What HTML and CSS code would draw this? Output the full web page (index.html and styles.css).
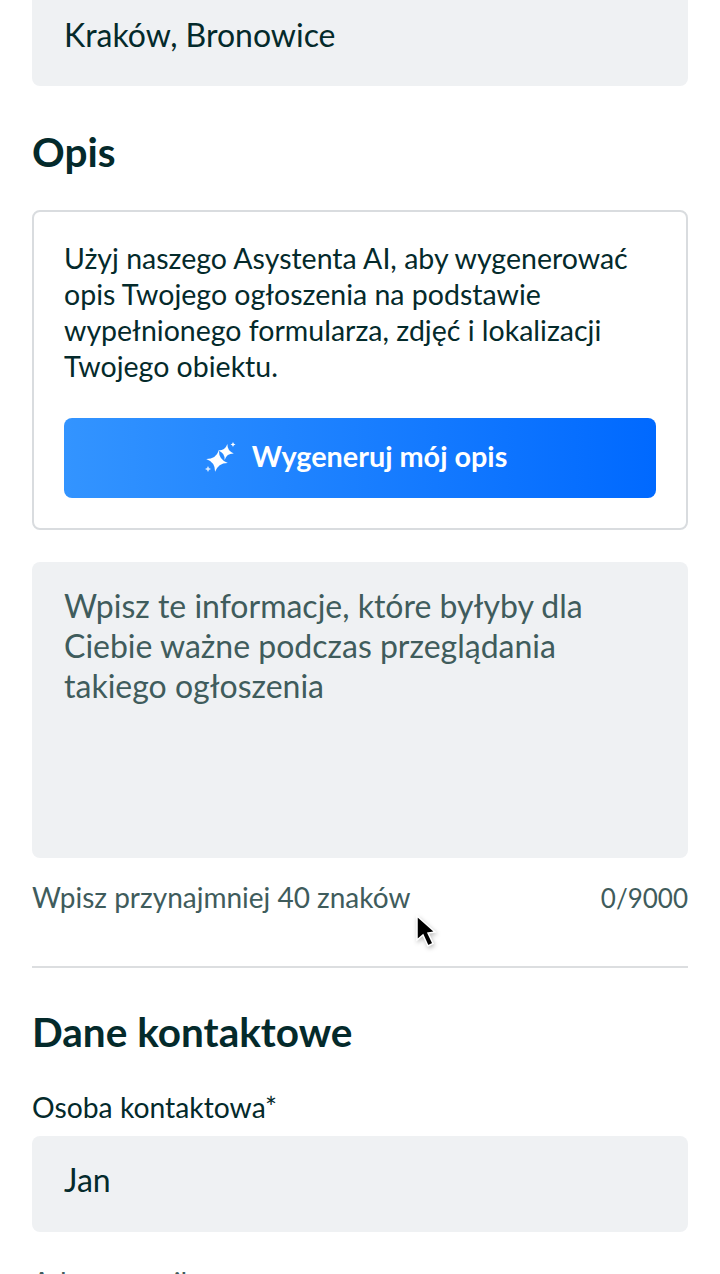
FILE: index.html
```html
<!DOCTYPE html>
<html lang="pl">

<head>
    <meta charset="UTF-8">
    <meta name="viewport" content="width=device-width, initial-scale=1.0">
    <title>Opis</title>
    <link rel="stylesheet" href="styles.css">
</head>

<body>
    <div class="container">
        <div class="field top-field">Kraków, Bronowice</div>

        <h2 class="title">Opis</h2>

        <div class="ai-box">
            <p>Użyj naszego Asystenta AI, aby wygenerować<br>opis Twojego ogłoszenia na podstawie<br>wypełnionego formularza, zdjęć i lokalizacji<br>Twojego obiektu.</p>
            <div class="ai-button">
                <svg width="32" height="32" viewBox="0 0 32 32" fill="#fff">
                    <path d="M12 8 Q13.500 17.500 23 19 Q13.500 20.500 12 30 Q10.500 20.500 1 19 Q10.500 17.500 12 8 Z" transform="rotate(10 12 19)" />
                    <path d="M21 2 Q22 9 29 10 Q22 11 21 18 Q20 11 13 10 Q20 9 21 2 Z" transform="rotate(10 21 10)" />
                    <path d="M28 0 Q28.400 2.100 30.500 2.500 Q28.400 2.900 28 5 Q27.600 2.900 25.500 2.500 Q27.600 2.100 28 0 Z" />
                    <path d="M3 24 Q3.500 26.500 6 27 Q3.500 27.500 3 30 Q2.500 27.500 0 27 Q2.500 26.500 3 24 Z" opacity="0.8" />
                </svg>
                <span class="ai-label">Wygeneruj mój opis</span>
            </div>
        </div>

        <div class="textarea">Wpisz te informacje, które byłyby dla<br>Ciebie ważne podczas przeglądania<br>takiego ogłoszenia</div>
        <div class="hint">
            <span>Wpisz przynajmniej 40 znaków</span>
            <span class="counter">0/9000</span>
        </div>

        <hr class="line">

        <h2 class="title contact-title">Dane kontaktowe</h2>

        <div class="label">Osoba kontaktowa*</div>
        <div class="field">Jan</div>
        <div class="label next-label">Adres e-mail</div>
    </div>

    <svg class="cursor" width="24" height="36" viewBox="0 0 24 36">
        <path d="M2 1 L2 25 L8 20 L13 31 L18 28.500 L13 18 L20 17 Z" fill="#000" stroke="#fff" stroke-width="1.500" />
    </svg>
</body>

</html>
```

FILE: styles.css
```css
* {
    margin: 0;
    padding: 0;
    box-sizing: border-box;
}

html,
body {
    height: 1274px;
    overflow: hidden;
    background-color: #fff;
}

body {
    position: relative;
    font-family: "Lato", "Noto Sans", sans-serif;
    color: #042a2b;
}

.container {
    padding: 0 32px;
    margin-top: -14px;
}

.field {
    display: flex;
    align-items: center;
    height: 96px;
    padding: 0 32px 10px;
    font-size: 32px;
    background-color: #eff1f3;
    border-radius: 8px;
}

.top-field {
    height: 100px;
    padding-bottom: 4px;
}

.title {
    font-size: 40.500px;
    line-height: 48px;
    font-weight: 700;
}

.top-field + .title {
    margin-top: 42px;
}

.ai-box {
    margin-top: 34px;
    padding: 28px 30px 30px;
    border: 2px solid #d9dcdf;
    border-radius: 8px;
}

.ai-box p {
    font-size: 28.500px;
    line-height: 36px;
}

.ai-button {
    display: flex;
    justify-content: center;
    align-items: center;
    gap: 15px;
    height: 80px;
    margin-top: 34px;
    padding-right: 8px;
    font-size: 28.800px;
    font-weight: 700;
    color: #fff;
    background: linear-gradient(90deg, #3394ff, #0069ff);
    border-radius: 8px;
}

.ai-label {
    margin-bottom: 4px;
}

.textarea {
    height: 296px;
    margin-top: 32px;
    padding: 24px 32px;
    font-size: 32px;
    line-height: 40px;
    color: #3f5c5c;
    background-color: #eff1f3;
    border-radius: 8px;
}

.hint {
    display: flex;
    justify-content: space-between;
    align-items: baseline;
    margin-top: 22px;
    font-size: 28px;
    line-height: 34px;
    color: #3f5c5c;
}

.counter {
    font-size: 26px;
}

.line {
    height: 2px;
    margin-top: 51px;
    border: 0;
    background-color: #dcdee0;
}

.contact-title {
    margin-top: 40px;
}

.label {
    margin-top: 33px;
    font-size: 28.300px;
    line-height: 36px;
}

.label + .field {
    margin-top: 11px;
}

.next-label {
    margin-top: 32px;
    color: #3f5c5c;
}

.cursor {
    position: absolute;
    left: 415px;
    top: 915px;
    filter: drop-shadow(1px 2px 2px rgba(0, 0, 0, 0.25));
}
```
